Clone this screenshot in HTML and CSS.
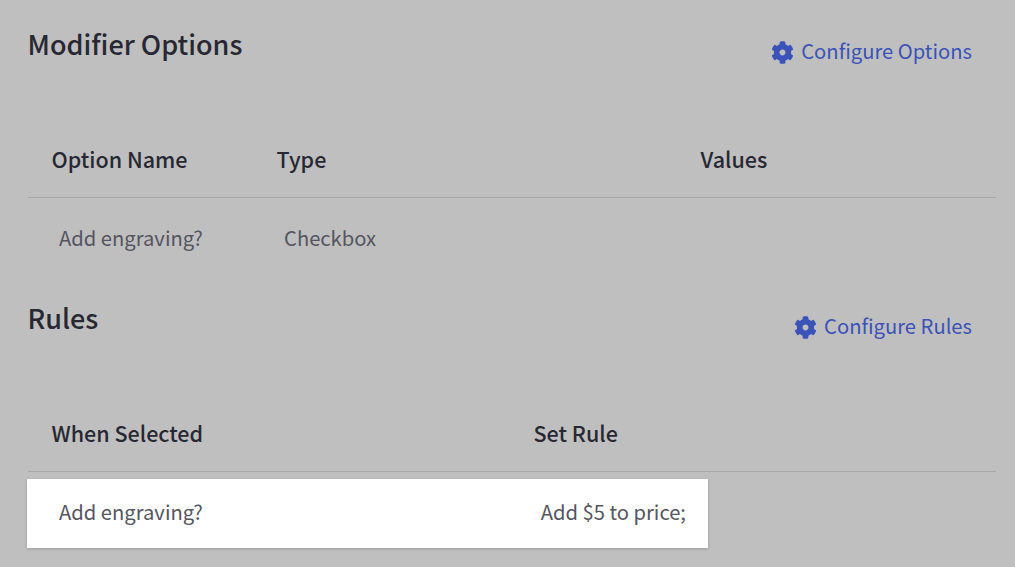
FILE: index.html
```html
<!DOCTYPE html>
<html lang="en">
<head>
  <meta charset="UTF-8">
  <title>Modifier Options</title>
  <link rel="stylesheet" href="styles.css">
</head>
<body>

  <section class="panel options-panel">
    <div class="panel-head">
      <h2>Modifier Options</h2>
      <a class="config-link" href="#">
        <svg class="gear" viewBox="0 0 512 512"><path fill-rule="evenodd" d="M487.4 315.7l-42.6-24.6c4.3-23.2 4.3-47 0-70.2l42.6-24.6c4.9-2.8 7.1-8.6 5.5-14-11.1-35.6-30-67.8-54.7-94.6-3.8-4.1-10-5.1-14.8-2.3L380.8 110c-17.9-15.4-38.5-27.3-60.8-35.1V25.8c0-5.6-3.9-10.5-9.4-11.7-36.7-8.2-74.3-7.8-109.2 0-5.5 1.2-9.4 6.1-9.4 11.7V75c-22.2 7.9-42.8 19.8-60.8 35.1L88.7 85.5c-4.9-2.8-11-1.9-14.8 2.3-24.7 26.7-43.6 58.9-54.7 94.6-1.7 5.4.6 11.2 5.5 14L67.3 221c-4.3 23.2-4.3 47 0 70.2l-42.6 24.6c-4.9 2.8-7.1 8.6-5.5 14 11.1 35.6 30 67.8 54.7 94.6 3.8 4.1 10 5.1 14.8 2.3l42.6-24.6c17.9 15.4 38.5 27.3 60.8 35.1v49.2c0 5.6 3.9 10.5 9.4 11.7 36.7 8.2 74.3 7.8 109.2 0 5.5-1.2 9.4-6.1 9.4-11.7v-49.2c22.2-7.9 42.8-19.8 60.8-35.1l42.6 24.6c4.9 2.8 11 1.9 14.8-2.3 24.7-26.7 43.6-58.9 54.7-94.6 1.5-5.5-.7-11.3-5.6-14.1zM256 322c-36.4 0-66-29.6-66-66s29.6-66 66-66 66 29.6 66 66-29.6 66-66 66z"/></svg>
        Configure Options
      </a>
    </div>
    <div class="row head-row options-cols">
      <span>Option Name</span>
      <span>Type</span>
      <span>Values</span>
    </div>
    <div class="row body-row options-cols">
      <span>Add engraving?</span>
      <span>Checkbox</span>
      <span></span>
    </div>
  </section>

  <section class="panel rules-panel">
    <div class="panel-head">
      <h2>Rules</h2>
      <a class="config-link" href="#">
        <svg class="gear" viewBox="0 0 512 512"><path fill-rule="evenodd" d="M487.4 315.7l-42.6-24.6c4.3-23.2 4.3-47 0-70.2l42.6-24.6c4.9-2.8 7.1-8.6 5.5-14-11.1-35.6-30-67.8-54.7-94.6-3.8-4.1-10-5.1-14.8-2.3L380.8 110c-17.9-15.4-38.5-27.3-60.8-35.1V25.8c0-5.6-3.9-10.5-9.4-11.7-36.7-8.2-74.3-7.8-109.2 0-5.5 1.2-9.4 6.1-9.4 11.7V75c-22.2 7.9-42.8 19.8-60.8 35.1L88.7 85.5c-4.9-2.8-11-1.9-14.8 2.3-24.7 26.7-43.6 58.9-54.7 94.6-1.7 5.4.6 11.2 5.5 14L67.3 221c-4.3 23.2-4.3 47 0 70.2l-42.6 24.6c-4.9 2.8-7.1 8.6-5.5 14 11.1 35.6 30 67.8 54.7 94.6 3.8 4.1 10 5.1 14.8 2.3l42.6-24.6c17.9 15.4 38.5 27.3 60.8 35.1v49.2c0 5.6 3.9 10.5 9.4 11.7 36.7 8.2 74.3 7.8 109.2 0 5.5-1.2 9.4-6.1 9.4-11.7v-49.2c22.2-7.9 42.8-19.8 60.8-35.1l42.6 24.6c4.9 2.8 11 1.9 14.8-2.3 24.7-26.7 43.6-58.9 54.7-94.6 1.5-5.5-.7-11.3-5.6-14.1zM256 322c-36.4 0-66-29.6-66-66s29.6-66 66-66 66 29.6 66 66-29.6 66-66 66z"/></svg>
        Configure Rules
      </a>
    </div>
    <div class="row head-row rules-cols">
      <span>When Selected</span>
      <span>Set Rule</span>
    </div>
    <div class="rule-card">
      <span>Add engraving?</span>
      <span>Add $5 to price;</span>
    </div>
  </section>

</body>
</html>
```

FILE: styles.css
```css
html, body {
  height: 100%;
}
body {
  font-family: "Noto Sans CJK SC", "Noto Sans", sans-serif;
  font-size: 20.2px;
  background: #bfbfbf;
  color: #55555f;
  margin: 0;
  padding: 0 19px 0 28px;
  overflow: hidden;
}
.options-panel {
  padding-top: 26px;
}
.rules-panel {
  padding-top: 46px;
}
.panel-head {
  display: flex;
  justify-content: space-between;
  align-items: flex-start;
  height: 103px;
}
h2 {
  margin: 0 0 0 -0.5px;
  font-size: 27px;
  line-height: 36px;
  font-weight: 500;
  color: #282833;
}
.config-link {
  display: flex;
  align-items: center;
  gap: 7px;
  margin: 9px 24px 0 0;
  color: #3b53b8;
  text-decoration: none;
  line-height: 32px;
}
.rules-panel .config-link {
  margin-top: 10px;
}
.gear {
  width: 23px;
  height: 23px;
  fill: #3b53b8;
  margin-top: 3px;
}
.row {
  display: grid;
}
.options-cols {
  grid-template-columns: 225px 424px 1fr;
}
.rules-cols {
  grid-template-columns: 482px 1fr;
}
.head-row {
  padding: 14px 0 22px 23.5px;
  font-size: 21.5px;
  line-height: 32px;
  font-weight: 500;
  color: #282833;
  border-bottom: 1px solid #a8a8a8;
}
.body-row {
  padding: 24px 0 0 31px;
  line-height: 32px;
}
.rule-card {
  display: flex;
  justify-content: space-between;
  align-items: center;
  width: 681px;
  height: 69px;
  box-sizing: border-box;
  margin: 7px 0 0 -1px;
  padding: 0 22px 4px 32px;
  background: #fff;
  box-shadow: 0 1px 3px rgba(0,0,0,0.2);
}
```
